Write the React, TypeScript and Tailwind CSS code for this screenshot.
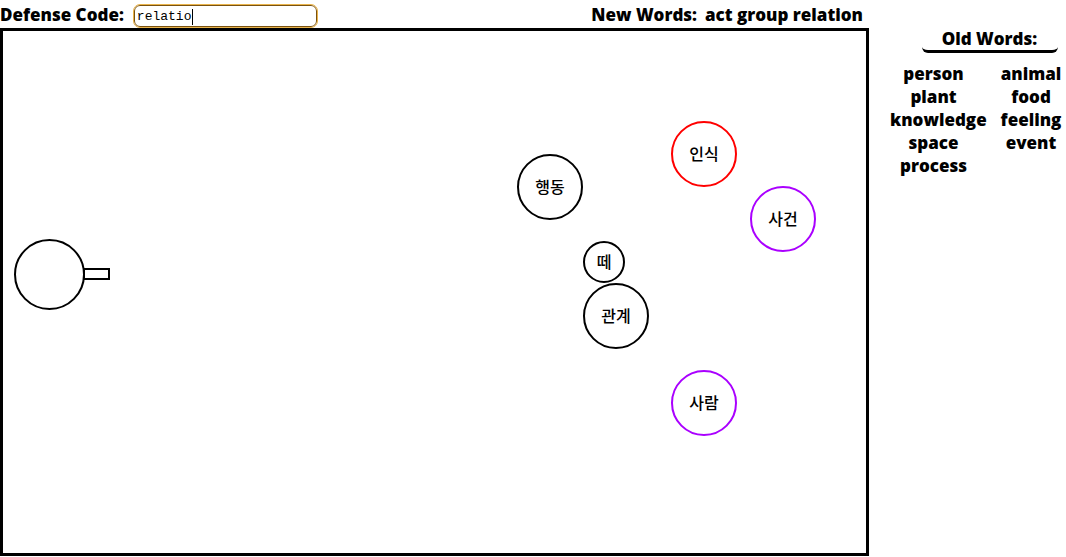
import { useState } from "react";

type Ball = { word: string; position: string; size: string; color: string };

const balls: Ball[] = [
  { word: "행동", position: "left-[514px] top-[123px]", size: "size-[66px]", color: "border-black" },
  { word: "인식", position: "left-[668px] top-[90px]", size: "size-[66px]", color: "border-[#ff0000]" },
  { word: "사건", position: "left-[747px] top-[155px]", size: "size-[66px]", color: "border-[#aa00ff]" },
  { word: "떼", position: "left-[580px] top-[210px]", size: "size-[42px]", color: "border-black" },
  { word: "관계", position: "left-[580px] top-[252px]", size: "size-[66px]", color: "border-black" },
  { word: "사람", position: "left-[668px] top-[339px]", size: "size-[66px]", color: "border-[#aa00ff]" },
];

const newWords = ["act", "group", "relation"];
const oldWords = [
  ["person", "animal"],
  ["plant", "food"],
  ["knowledge", "feeling"],
  ["space", "event"],
  ["process", ""],
];

export default function App() {
  const [code, setCode] = useState("relatio");

  return (
    <div className="flex min-h-screen bg-white font-['Open_Sans',sans-serif] text-[17px] font-extrabold text-black">
      <main className="flex min-w-0 flex-1 flex-col pb-px">
        <header className="flex h-7 items-center justify-between pt-1 pr-1.5">
          <div className="flex items-center gap-2.5">
            <label htmlFor="code" className="pb-0.5 leading-5 whitespace-nowrap">Defense Code:</label>
            <div className="relative flex font-['Liberation_Mono',monospace] text-[13px] font-normal">
              <input
                id="code"
                type="text"
                autoFocus
                autoComplete="off"
                spellCheck={false}
                value={code}
                onChange={(e) => setCode(e.target.value)}
                className="h-[22px] w-[183px] rounded-md border border-[#7a5210] bg-white px-0.5 caret-transparent outline-1 outline-[#e9b44c]"
              />
              <span
                aria-hidden="true"
                className="pointer-events-none absolute top-1 h-4 w-px bg-black"
                style={{ left: `calc(${code.length}ch + 4px)` }}
              />
            </div>
          </div>
          <p className="flex gap-2 pb-0.5 leading-5 whitespace-nowrap">
            <span>New Words:</span>
            <span>{newWords.join(" ")}</span>
          </p>
        </header>
        <section aria-label="Playing field" className="relative flex-1 overflow-hidden border-3 border-black">
          <svg className="absolute top-[207px] left-[10px]" width="110" height="74" fill="none" stroke="black" strokeWidth="2">
            <circle cx="36.5" cy="36.5" r="34.5" />
            <rect x="71" y="31" width="25" height="10" />
          </svg>
          {balls.map((ball) => (
            <div
              key={ball.word}
              className={`absolute flex items-center justify-center rounded-full border-2 pb-0.5 font-['Noto_Sans_CJK_KR',sans-serif] text-base leading-5 font-medium ${ball.position} ${ball.size} ${ball.color}`}
            >
              {ball.word}
            </div>
          ))}
        </section>
      </main>
      <aside className="flex w-[197px] flex-col items-center pt-7 pl-[21px]">
        <h2 className="ml-[23px] w-[136px] rounded-md border-b-3 border-black text-center leading-[22px]">Old Words:</h2>
        <table className="mt-[9px] w-full table-fixed text-center whitespace-nowrap">
          <tbody>
            {oldWords.map(([left, right]) => (
              <tr key={left} className="h-[23px] leading-[23px]">
                <td className="w-[87px] p-0">{left}</td>
                <td className="p-0 pl-[19px]">{right}</td>
              </tr>
            ))}
          </tbody>
        </table>
      </aside>
    </div>
  );
}
